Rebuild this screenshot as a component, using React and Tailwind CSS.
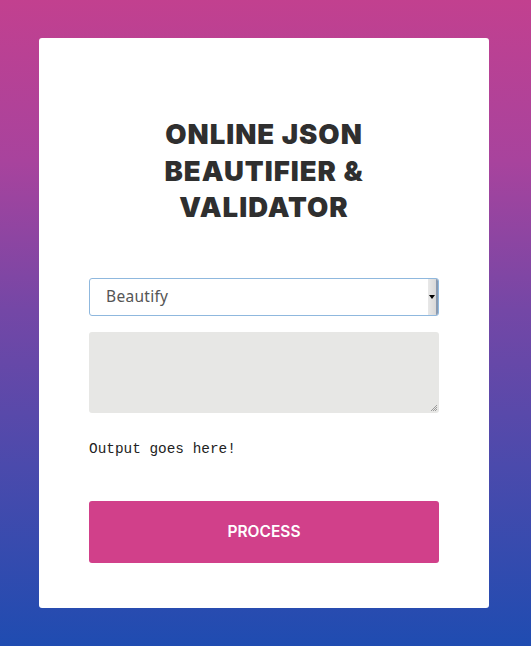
export default function App() {
  return (
    <div className="relative w-[531px] h-[646px] overflow-hidden bg-[linear-gradient(180deg,#c2408f_0%,#a8439d_25%,#7447a6_48%,#4b4aac_72%,#1f4cb1_100%)]">
      <div className="relative pt-[38px] px-[39px]">
        <div className="w-[450px] h-[570px] bg-white rounded-[3px] px-[50px] pt-[80px] flex flex-col">
          <h1 className="text-center text-[#2f2f2f] font-black text-[27.5px] leading-[36.5px] tracking-[1px] px-[50px] -mt-[2px]" style={{ fontFamily: "Inter, 'Noto Sans', sans-serif" }}>
            ONLINE JSON BEAUTIFIER &amp; VALIDATOR
          </h1>
          <div className="mt-[52px] h-[38px] border border-[#8fb8de] rounded-[3px] flex items-center relative">
            <span className="pl-[16px] text-[15.5px] text-[#555] tracking-[0.3px]" style={{ fontFamily: "'Noto Sans', sans-serif" }}>Beautify</span>
            <div className="absolute right-0 top-0 bottom-0 w-[10px] bg-[linear-gradient(90deg,#e8e8e8,#d8d8d8)] border-r-2 border-[#8a9ab0] flex items-center justify-center rounded-r-[2px]">
              <div className="w-0 h-0 border-l-[3px] border-r-[3px] border-t-[4px] border-l-transparent border-r-transparent border-t-black" />
            </div>
          </div>
          <div className="mt-[16px] h-[81px] bg-[#e7e7e5] rounded-[3px] relative">
            <svg className="absolute right-[1px] bottom-[1px]" width="9" height="9" viewBox="0 0 9 9">
              <path d="M8 2L2 8M8 4L4 8M8 6L6 8" stroke="#888" strokeWidth="0.8" />
            </svg>
          </div>
          <div className="mt-[27px] text-[14.4px] text-[#222] leading-[18px]" style={{ fontFamily: "'Liberation Mono', monospace" }}>Output goes here!</div>
          <button className="mt-[43px] h-[62px] w-full bg-[#d1408a] rounded-[3px] text-white text-[15.5px] font-semibold" style={{ fontFamily: "Inter, 'Noto Sans', sans-serif" }}>
            PROCESS
          </button>
        </div>
      </div>
    </div>
  );
}
